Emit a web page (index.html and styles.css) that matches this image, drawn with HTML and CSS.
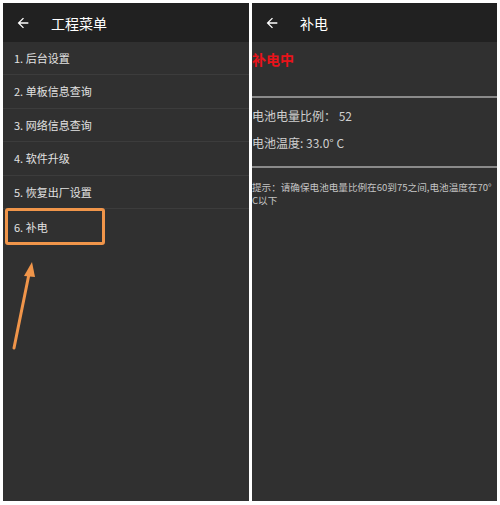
FILE: index.html
```html
<!DOCTYPE html>
<html lang="zh">
<head>
  <meta charset="UTF-8">
  <meta name="viewport" content="width=device-width, initial-scale=1.0">
  <title>工程菜单</title>
  <link rel="stylesheet" href="styles.css">
</head>
<body>
  <div class="screens">
    <div class="panel left">
      <div class="toolbar">
        <svg class="back" viewBox="0 0 24 24" width="16" height="16"><path d="M20 11H7.83l5.59-5.59L12 4l-8 8 8 8 1.41-1.41L7.83 13H20v-2z" fill="#fff"/></svg>
        <span class="title">工程菜单</span>
      </div>
      <ul class="menu">
        <li>1. 后台设置</li>
        <li>2. 单板信息查询</li>
        <li>3. 网络信息查询</li>
        <li>4. 软件升级</li>
        <li>5. 恢复出厂设置</li>
        <li class="picked">6. 补电</li>
      </ul>
      <svg class="pointer" width="40" height="100" viewBox="0 0 40 100">
        <line x1="11" y1="86" x2="26" y2="12" stroke="#f0954a" stroke-width="3" stroke-linecap="round"/>
        <polygon points="29,0 21,14 32,15" fill="#f0954a"/>
      </svg>
    </div>
    <div class="panel right">
      <div class="toolbar">
        <svg class="back" viewBox="0 0 24 24" width="16" height="16"><path d="M20 11H7.83l5.59-5.59L12 4l-8 8 8 8 1.41-1.41L7.83 13H20v-2z" fill="#fff"/></svg>
        <span class="title">补电</span>
      </div>
      <div class="status">补电中</div>
      <div class="info">
        <p>电池电量比例： 52</p>
        <p>电池温度: 33.0° C</p>
      </div>
      <p class="hint">提示：请确保电池电量比例在60到75之间,电池温度在70° C以下</p>
    </div>
  </div>
</body>
</html>
```

FILE: styles.css
```css
body {
  margin: 0;
  background: #fff;
  font-family: "Noto Sans CJK SC", "Roboto", sans-serif;
}
.screens {
  display: flex;
  gap: 3px;
  padding: 3px;
  height: 505px;
  box-sizing: border-box;
  padding-bottom: 4px;
}
.panel {
  position: relative;
  background: #303030;
  color: #ddd;
}
.panel.left {
  width: 246px;
}
.panel.right {
  width: 245px;
}
.toolbar {
  height: 39px;
  background: #212121;
  display: flex;
  align-items: center;
  padding-left: 12px;
}
.toolbar .title {
  color: #fff;
  font-size: 14px;
  margin-left: 20px;
}
.menu {
  list-style: none;
  margin: 0;
  padding: 0;
}
.menu li {
  height: 32.4px;
  line-height: 33px;
  border-bottom: 1px solid #3c3c3c;
  font-size: 11px;
  padding-left: 11px;
  color: #e2e2e2;
}
.menu li.picked {
  margin-left: 2px;
  width: 88px;
  height: 31px;
  line-height: 32px;
  border: 3px solid #f0954a;
  border-radius: 3px;
  padding-left: 6px;
  margin-top: -1px;
}
.pointer {
  position: absolute;
  left: 0;
  top: 259px;
}
.status {
  color: #e8131a;
  font-size: 14px;
  font-weight: bold;
  height: 56px;
  padding-top: 7px;
  box-sizing: border-box;
  border-bottom: 2px solid #8a8a8a;
}
.info {
  height: 70px;
  border-bottom: 2px solid #8a8a8a;
  padding-top: 4px;
  box-sizing: border-box;
}
.info p {
  margin: 0;
  font-size: 12px;
  line-height: 27px;
  color: #cfcfcf;
}
.hint {
  margin: 13px 0 0;
  font-size: 9.6px;
  line-height: 13px;
  color: #c4c4c4;
}
```
